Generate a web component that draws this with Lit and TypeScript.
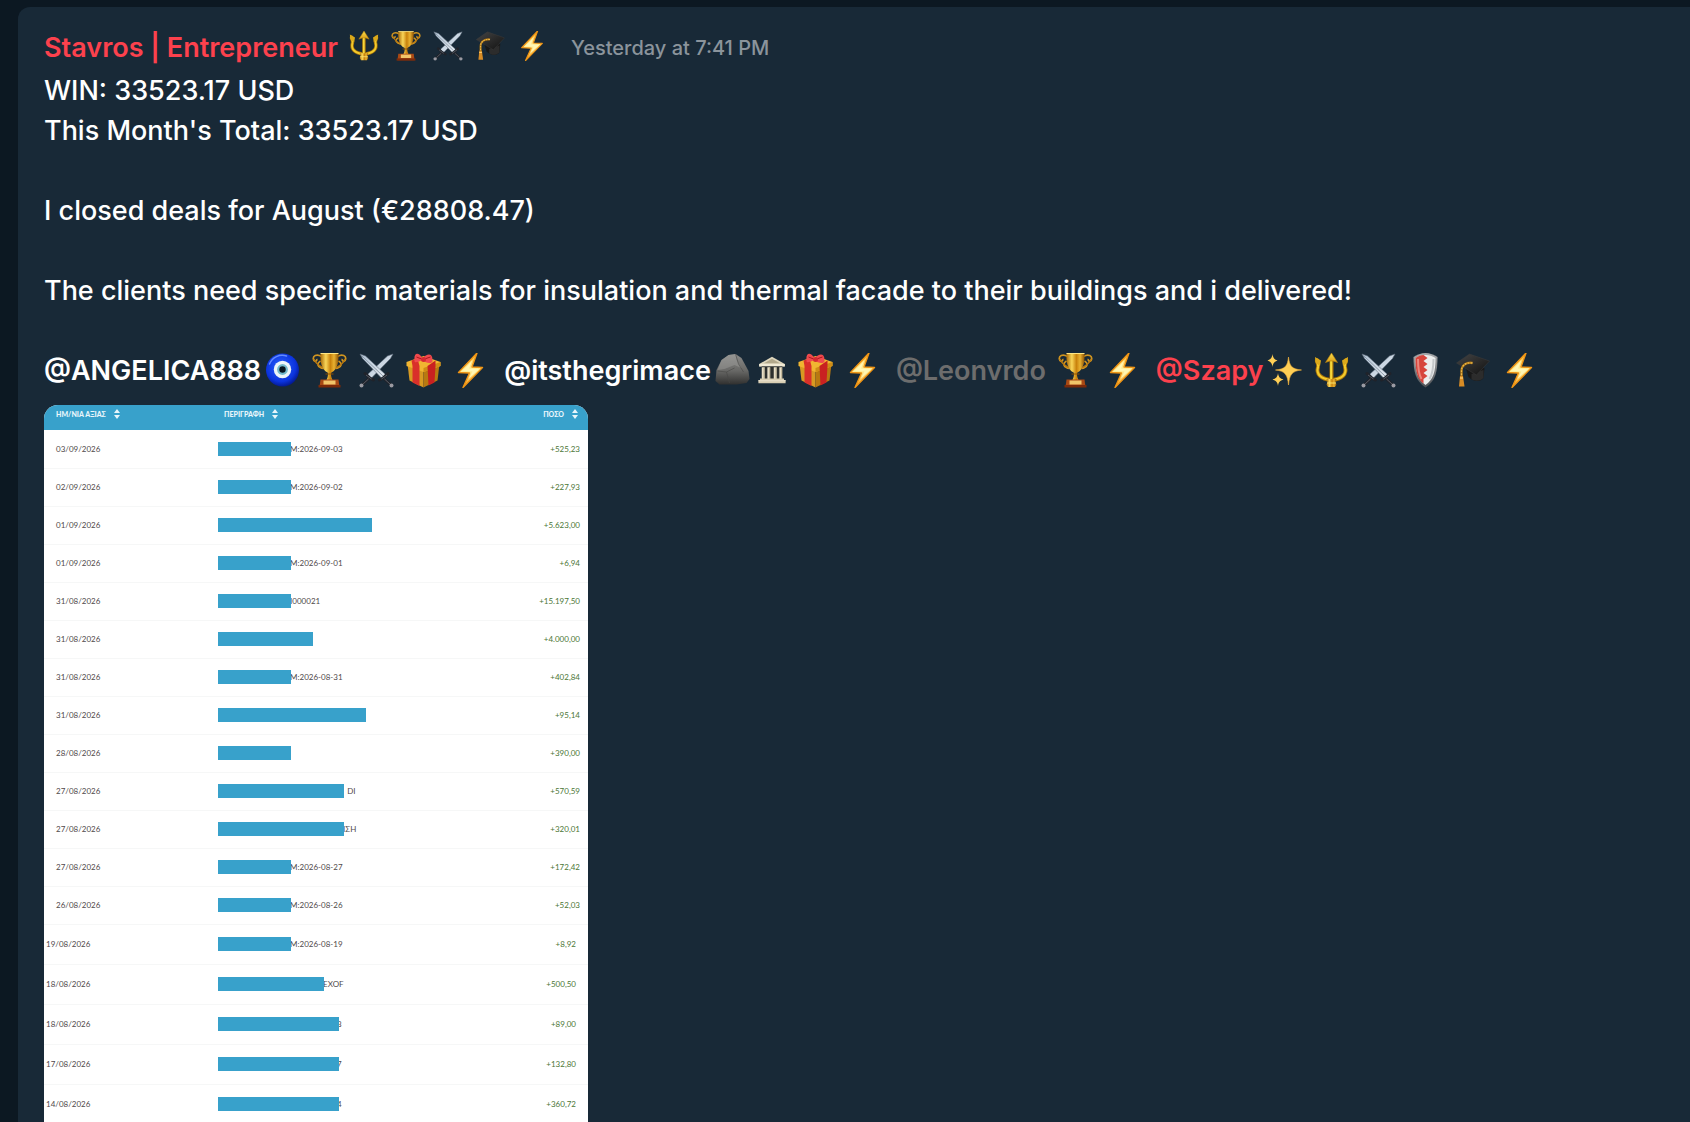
import { LitElement, html, css, svg, nothing } from "lit";
import type { SVGTemplateResult, TemplateResult } from "lit";
import { customElement } from "lit/decorators.js";
import { classMap } from "lit/directives/class-map.js";

type IconName =
  | "trident" | "trophy" | "swords" | "cap" | "bolt" | "eye"
  | "gift" | "rock" | "temple" | "sparkles" | "shield";

interface Mention {
  name: string;
  tone: "white" | "grey" | "red";
  spaced?: boolean;
  icons: (IconName | IconName[])[];
}

interface Entry {
  date: string;
  bar: number;
  note: string;
  amount: string;
}

const gradients = svg`
  <linearGradient id="gold" x1="0" x2="1">
    <stop offset="0" stop-color="#a86a08"/><stop offset=".3" stop-color="#f9d659"/>
    <stop offset=".55" stop-color="#c9820c"/><stop offset=".75" stop-color="#e9b231"/><stop offset="1" stop-color="#8d5204"/>
  </linearGradient>
  <linearGradient id="goldDown" x1="0" y1="0" x2="0" y2="1">
    <stop offset="0" stop-color="#fbe04c"/><stop offset="1" stop-color="#d99a16"/>
  </linearGradient>
  <linearGradient id="flash" x1="0" y1="0" x2="0" y2="1">
    <stop offset="0" stop-color="#ffb325"/><stop offset=".5" stop-color="#fff3a0"/><stop offset="1" stop-color="#f79a12"/>
  </linearGradient>
  <linearGradient id="steel" x1="0" y1="0" x2="1" y2="1">
    <stop offset="0" stop-color="#b4c6d8"/><stop offset="1" stop-color="#e3e8ee"/>
  </linearGradient>
  <radialGradient id="blueBead" cx=".45" cy=".4" r=".6">
    <stop offset="0" stop-color="#2b62ff"/><stop offset=".75" stop-color="#0b33dd"/><stop offset="1" stop-color="#041a92"/>
  </radialGradient>
  <linearGradient id="stone" x1="0" y1="0" x2="0" y2="1">
    <stop offset="0" stop-color="#8b8b89"/><stop offset=".55" stop-color="#686866"/><stop offset="1" stop-color="#30302f"/>
  </linearGradient>
  <linearGradient id="felt" x1="0" y1="0" x2="1" y2="1">
    <stop offset="0" stop-color="#454545"/><stop offset="1" stop-color="#111"/>
  </linearGradient>
  <linearGradient id="rim" x1="0" y1="0" x2="0" y2="1">
    <stop offset="0" stop-color="#a9aaac"/><stop offset="1" stop-color="#4d5054"/>
  </linearGradient>
`;

const icons: Record<IconName, SVGTemplateResult> = {
  trident: svg`
    <g fill="none" stroke-linecap="round" stroke-linejoin="round">
      <path d="M3.500 8C2.500 10 5.500 11 4.500 15C2.500 22 7 27 18 28C29 27 33.500 22 31.500 15C30.500 11 33.500 10 32.500 8" stroke="#a3700a" stroke-width="4"/>
      <path d="M3.500 8C2.500 10 5.500 11 4.500 15C2.500 22 7 27 18 28C29 27 33.500 22 31.500 15C30.500 11 33.500 10 32.500 8" stroke="#f3cb2c" stroke-width="2.200"/>
      <path d="M18 8V30" stroke="#a3700a" stroke-width="4"/><path d="M17.700 8V30" stroke="#f7d83a" stroke-width="2.200"/>
    </g>
    <path d="M18 1L24 10.500L19.500 9H16.500L12 10.500Z" fill="url(#goldDown)" stroke="#b7830c" stroke-width=".6"/>
    <path d="M1.500 5L7.500 8.500L6.500 14L2 10.500Z M34.500 5L28.500 8.500L29.500 14L34 10.500Z" fill="#dba91b"/>
    <path d="M13 27H23L22 30L23 32.500L21.500 35H14.500L13 32.500L14 30Z" fill="url(#gold)"/>
    <path d="M13.500 31H22.500" stroke="#fbe26a" stroke-width="1"/>`,
  trophy: svg`
    <path d="M10 4.500C5 1.500 1 4 2 7.500C3 10.500 6 9 5 7M9 9C4 12 7 15.500 12 16.500M26 4.500C31 1.500 35 4 34 7.500C33 10.500 30 9 31 7M27 9C32 12 29 15.500 24 16.500" fill="none" stroke="#cf9420" stroke-width="1.700"/>
    <path d="M2.500 7C4 12 8 14 12 16M33.500 7C32 12 28 14 24 16" fill="none" stroke="#b67610" stroke-width="1.300"/>
    <path d="M9 1.500H27C27.500 9 26 18 20 20.500C19 21 19.500 25 21 28H15C16.500 25 17 21 16 20.500C10 18 8.500 9 9 1.500Z" fill="url(#gold)"/>
    <path d="M9 1.500H27" stroke="#ffe684" stroke-width="1"/>
    <path d="M14 22H22" stroke="#8d5204" stroke-width="1"/>
    <path d="M9 27.500H27L28 35H8Z" fill="#a94914"/><path d="M12 28.500H24V32.500H12Z" fill="#f1c56a"/>
    <path d="M7 33H29V35.500H7Z" fill="#7c2a09"/>`,
  swords: svg`
    <path d="M34.500 2L32 6.500L13 26L9 22.500L29 4Z" fill="url(#steel)" stroke="#5c6a78" stroke-width=".6"/>
    <path d="M1.500 2L4 6.500L23 26L27 22.500L7 4Z" fill="url(#steel)" stroke="#5c6a78" stroke-width=".6"/>
    <path d="M3 3.500L24.500 24" stroke="#7e8c9b" stroke-width=".8"/>
    <path d="M6.500 21.500C7.500 21 8 25.500 15 28M11 26L3.500 33M29.500 21.500C28.500 21 28 25.500 21 28M25 26L32.500 33" fill="none" stroke="#20232a" stroke-width="3" stroke-linecap="round"/>
    <path d="M10 27L4.500 32M26 27L31.500 32M7.500 23L13 27M28.500 23L23 27" stroke="#5b616c" stroke-width=".9"/>
    <circle cx="3" cy="33.500" r="2" fill="#9a9aa2"/><circle cx="33" cy="33.500" r="2" fill="#9a9aa2"/>`,
  cap: svg`
    <path d="M11 15L14 25C19 30 26 30 29 26L30 16Z" fill="#191919"/>
    <path d="M17 22L29 18V26C25 30 19 29 17 27Z" fill="#2c2c2c"/>
    <path d="M2 11L15 2L35 9L22 23Z" fill="url(#felt)" stroke="#3d3d3d" stroke-width=".5"/>
    <path d="M18 11C12 10 7 13 7 19V25" fill="none" stroke="#a97013" stroke-width="2.400"/>
    <path d="M18 11C12 10 7 13 7 19V25" fill="none" stroke="#ecb94a" stroke-width="1.300" stroke-dasharray="2 1"/>
    <path d="M5.500 24H8.500L10 34.500H4.500Z" fill="#d88c25"/><path d="M5.500 26H8.500" stroke="#ffd477" stroke-width="1.200"/>`,
  bolt: svg`
    <path d="M24.500 1L6 20.500L17 21L10.500 35.500L30 15.500L19.500 15Z" fill="url(#flash)" stroke="#ef9414" stroke-width="1.400" stroke-linejoin="round"/>
    <path d="M20 8L10.500 18.800L20 19.200L16 27L26 17.200L16.500 16.700Z" fill="#fff6b4"/>`,
  eye: svg`
    <circle cx="18" cy="18" r="16.500" fill="url(#blueBead)"/>
    <path d="M5 12C8 5 15 2 22 4" fill="none" stroke="#638bff" stroke-width="1.500" stroke-linecap="round"/>
    <circle cx="18" cy="17.500" r="8.700" fill="#edf5f8"/><circle cx="18" cy="17.500" r="5.400" fill="#73b9cb"/>
    <circle cx="18" cy="17.500" r="3.200" fill="#08151f"/>`,
  gift: svg`
    <path d="M2 12L18 19V35.500L4 28.500Z" fill="#d79a22"/><path d="M18 19L34 12L32 28.500L18 35.500Z" fill="#b87910"/>
    <path d="M1 10L18 4L35 10V14L18 20L1 14Z" fill="#f0b531"/><path d="M18 16L35 10V14L18 20Z" fill="#cf8d16"/>
    <path d="M6 8.500L12 6.500L14 14V34L7 30.500V14Z" fill="#d9302a"/>
    <path d="M22 14L30 8.500V14L29 30.500L23 33.500Z" fill="#c92121"/>
    <path d="M17 6C13 0 8 0 9 9C9 12 14 9 17 8C21 12 28 12 27 8C27 1 22 1 17 6Z" fill="#f04a4d"/>
    <path d="M11 5L16 7M25 5L19 7" stroke="#a9151d" stroke-width="1"/><circle cx="18" cy="7.500" r="2.500" fill="#d52932"/>`,
  rock: svg`
    <path d="M1 29L2 18L7 8L14 3L21 2L27 6L34 19L35 27L32 31L22 32.500H5Z" fill="url(#stone)"/>
    <path d="M14 3L21 2L22 8L27 16L20 13L10 17L3 18L7 8Z" fill="#a6a6a2" opacity=".4"/>
    <path d="M21 2L24 12L29 20M3 19L12 20L20 16M12 20L15 31" fill="none" stroke="#484846" stroke-width="1" opacity=".6"/>`,
  temple: svg`
    <path d="M2 11L18 2L34 11V14H2Z" fill="#ded6bd"/><path d="M8 10L18 4.500L28 10Z" fill="#b2a88b"/>
    <path d="M2 11H34V14H2Z" fill="#f0e9d4"/><path d="M5 14H31V31H5Z" fill="#2d302e"/>
    <path d="M7 15V30M14 15V30M22 15V30M29 15V30" stroke="#e8dfc7" stroke-width="3.600"/>
    <path d="M8 15V30M15 15V30M23 15V30M30 15V30" stroke="#b5aa8b" stroke-width="1"/>
    <path d="M3 29H33V31H35V35H1V31H3Z" fill="#d8ceb2"/><path d="M1 32H35" stroke="#f1ead8" stroke-width="1"/>`,
  sparkles: svg`
    <path d="M22 5C23 14 25 17 35 18C25 19 23 23 22 33C21 23 19 19 9 18C19 17 21 14 22 5Z" fill="#ffcf55" stroke="#f3b13a" stroke-width=".6"/>
    <path d="M6 2C6.500 6 8 7.500 11 8.500C8 9.500 6.500 11 6 15C5.500 11 4 9.500 1 8.500C4 7.500 5.500 6 6 2Z" fill="#ffcf55"/>
    <path d="M11.500 21C12 25 13.500 26.500 17 27.500C13.500 28.500 12 30 11.500 34C11 30 9.500 28.500 6 27.500C9.500 26.500 11 25 11.500 21Z" fill="#ffcf55"/>`,
  shield: svg`
    <path d="M18 1C22 1 27 3 30 5C30 20 28 29 18 35.500C8 29 6 20 6 5C9 3 14 1 18 1Z" fill="url(#rim)"/>
    <path d="M18 3C22 3 25 4 28 6C28 20 26 27 18 33C10 27 8 20 8 6C11 4 14 3 18 3Z" fill="#eceded"/>
    <path d="M16 3C13 3 11 4 8 6C8 20 10 27 16 31.500V27L20 24L16 21L20 18L16 15L20 12L16 9L20 6Z" fill="#d7453c"/>
    <path d="M10.500 7C10.500 16 11 22 14 27" fill="none" stroke="#ec867c" stroke-width="2"/>
    <path d="M26 7C26 16 25 22 22 27" fill="none" stroke="#c5c8ca" stroke-width="2"/>`,
};

const authorIcons: IconName[] = ["trident", "trophy", "swords", "cap", "bolt"];

const mentions: Mention[] = [
  { name: "@ANGELICA888", tone: "white", icons: ["eye", "trophy", "swords", "gift", "bolt"] },
  { name: "@itsthegrimace", tone: "white", icons: [["rock", "temple"], "gift", "bolt"] },
  { name: "@Leonvrdo", tone: "grey", spaced: true, icons: ["trophy", "bolt"] },
  { name: "@Szapy", tone: "red", icons: ["sparkles", "trident", "swords", "shield", "cap", "bolt"] },
];

const recent: Entry[] = [
  { date: "03/09/2026", bar: 73, note: "M:2026-09-03", amount: "+525,23" },
  { date: "02/09/2026", bar: 73, note: "M:2026-09-02", amount: "+227,93" },
  { date: "01/09/2026", bar: 154, note: "", amount: "+5.623,00" },
  { date: "01/09/2026", bar: 73, note: "M:2026-09-01", amount: "+6,94" },
  { date: "31/08/2026", bar: 73, note: "I000021", amount: "+15.197,50" },
  { date: "31/08/2026", bar: 95, note: "", amount: "+4.000,00" },
  { date: "31/08/2026", bar: 73, note: "M:2026-08-31", amount: "+402,84" },
  { date: "31/08/2026", bar: 148, note: "", amount: "+95,14" },
  { date: "28/08/2026", bar: 73, note: "", amount: "+390,00" },
  { date: "27/08/2026", bar: 126, note: "\u00a0\u00a0DI", amount: "+570,59" },
  { date: "27/08/2026", bar: 126, note: "ΙΣΗ", amount: "+320,01" },
  { date: "27/08/2026", bar: 73, note: "M:2026-08-27", amount: "+172,42" },
  { date: "26/08/2026", bar: 73, note: "M:2026-08-26", amount: "+52,03" },
];

const earlier: Entry[] = [
  { date: "19/08/2026", bar: 73, note: "M:2026-08-19", amount: "+8,92" },
  { date: "18/08/2026", bar: 106, note: "EXOF", amount: "+500,50" },
  { date: "18/08/2026", bar: 121, note: "3", amount: "+89,00" },
  { date: "17/08/2026", bar: 121, note: "7", amount: "+132,80" },
  { date: "14/08/2026", bar: 121, note: "4", amount: "+360,72" },
];

@customElement("app-root")
export class AppRoot extends LitElement {
  static styles = css`
    :host {
      display: flex;
      box-sizing: border-box;
      height: 100vh;
      overflow: hidden;
      padding: 7px 0 0 18px;
      background: #0c1822;
      color: #fff;
      font-family: Inter, "Liberation Sans", sans-serif;
      font-size: 27px;
      font-weight: 500;
      line-height: 40px;
    }
    .defs { position: absolute; }
    .message {
      flex: 1;
      min-width: 0;
      padding: 21px 26px 0;
      border-top-left-radius: 12px;
      background: #182937;
    }
    .head { display: flex; align-items: center; margin-bottom: 3px; }
    .author { margin: 0; font-size: 27px; font-weight: 600; color: #fc414d; }
    .badges { display: flex; gap: 12px; margin-left: 11px; }
    .badges .icon { width: 30px; height: 30px; margin-bottom: 4px; }
    .time { margin-left: 24px; font-size: 20px; color: #8b949c; }
    .text { margin: 0; white-space: pre-line; }
    .mentions { display: flex; flex-wrap: wrap; column-gap: 16px; margin-bottom: 14px; }
    .mention { display: flex; align-items: center; gap: 4px; }
    .mention.spaced { gap: 12px; }
    .mention a { font-weight: 600; text-decoration: none; }
    .white a { color: #fff; }
    .grey a { color: #6d6d6d; }
    .red a { color: #fc414d; }
    .tags { display: flex; align-items: center; gap: 12px; }
    .pair { display: flex; align-items: center; gap: 8px; }
    .icon { display: block; width: 35px; height: 35px; margin-bottom: 2px; }
    .icon.temple { width: 28px; height: 28px; }
    .sheet {
      width: 544px;
      max-width: 100%;
      overflow: hidden;
      border-radius: 14px 14px 0 0;
      background: #fff;
      color: #4f494a;
      font-family: Lato, "Open Sans", sans-serif;
      font-size: 8px;
      font-weight: 400;
      line-height: 14px;
    }
    table { width: 100%; table-layout: fixed; border-collapse: collapse; }
    th, td { box-sizing: border-box; padding: 0; text-align: left; white-space: nowrap; }
    .day { width: 32%; }
    .sum { width: 20%; }
    th { height: 25px; padding-bottom: 8px; background: #38a1cb; vertical-align: middle; }
    th.day { padding-left: 12px; }
    th.what { padding-left: 6px; }
    th.sum { padding-right: 10px; text-align: right; }
    .sort {
      display: inline-flex;
      align-items: center;
      gap: 8px;
      padding: 0;
      border: 0;
      background: none;
      color: #e9f6fb;
      font: inherit;
      font-size: 7px;
      font-weight: 900;
      line-height: 14px;
    }
    .arrows { display: block; width: 6px; height: 10px; }
    td { height: 38px; border-bottom: 1px solid #f6f7f7; }
    td.day { padding-left: 12px; }
    td.sum { padding-right: 8px; text-align: right; color: #4c7636; }
    .earlier td { height: 40px; }
    .earlier td.day { padding-left: 2px; }
    .earlier td.sum { padding-right: 12px; }
    .cell { display: flex; align-items: center; }
    .bar { z-index: 1; flex: none; height: 14px; background: #38a1cb; }
    .note { margin-left: -1px; }
    .peek .note { margin-left: -2px; }
  `;

  private icon(name: IconName): TemplateResult {
    return html`<svg class="icon ${name}" viewBox="1 1 34 35" aria-hidden="true">${icons[name]}</svg>`;
  }

  private heading(label: string, kind: string): TemplateResult {
    return html`
      <th class=${kind} scope="col">
        <button class="sort" type="button">
          ${label}
          <svg class="arrows" viewBox="0 0 6 10" aria-hidden="true">
            <path d="M3 0L6 4H0ZM3 10L6 6H0Z" fill="currentColor"/>
          </svg>
        </button>
      </th>`;
  }

  private entry(e: Entry): TemplateResult {
    return html`
      <tr>
        <td class="day">${e.date}</td>
        <td class="what">
          <div class=${classMap({ cell: true, peek: e.note.length === 1 })}>
            <span class="bar" style="width:${e.bar}px"></span>
            ${e.note ? html`<span class="note">${e.note}</span>` : nothing}
          </div>
        </td>
        <td class="sum">${e.amount}</td>
      </tr>`;
  }

  private mention(m: Mention): TemplateResult {
    return html`
      <span class=${classMap({ mention: true, [m.tone]: true, spaced: !!m.spaced })}>
        <a href="#">${m.name}</a>
        <span class="tags">
          ${m.icons.map((i) =>
            Array.isArray(i)
              ? html`<span class="pair">${i.map((n) => this.icon(n))}</span>`
              : this.icon(i))}
        </span>
      </span>`;
  }

  render() {
    return html`
      <svg class="defs" width="0" height="0" aria-hidden="true"><defs>${gradients}</defs></svg>
      <article class="message">
        <header class="head">
          <h1 class="author">Stavros | Entrepreneur</h1>
          <span class="badges">${authorIcons.map((n) => this.icon(n))}</span>
          <time class="time">Yesterday at 7:41 PM</time>
        </header>
        <p class="text">${[
          "WIN: 33523.17 USD",
          "This Month's Total: 33523.17 USD",
          "",
          "I closed deals for August (€28808.47)",
          "",
          "The clients need specific materials for insulation and thermal facade to their buildings and i delivered!",
          "",
          "",
        ].join("\n")}</p>
        <div class="mentions">${mentions.map((m) => this.mention(m))}</div>
        <div class="sheet">
          <table>
            <thead>
              <tr>
                ${this.heading("ΗΜ/ΝΙΑ ΑΞΙΑΣ", "day")}
                ${this.heading("ΠΕΡΙΓΡΑΦΗ", "what")}
                ${this.heading("ΠΟΣΟ", "sum")}
              </tr>
            </thead>
            <tbody>${recent.map((e) => this.entry(e))}</tbody>
            <tbody class="earlier">${earlier.map((e) => this.entry(e))}</tbody>
          </table>
        </div>
      </article>`;
  }
}
